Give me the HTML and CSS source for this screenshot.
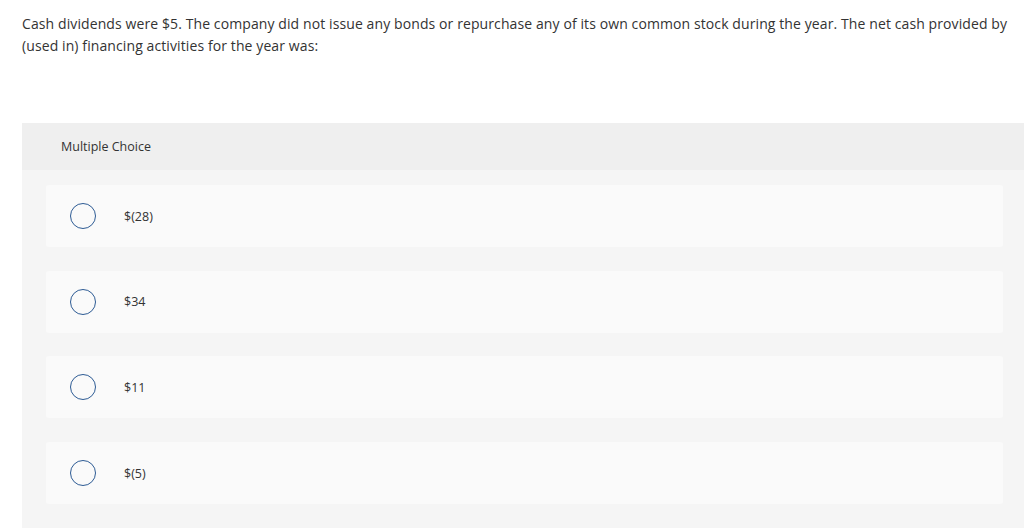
FILE: index.html
```html
<!DOCTYPE html>
<html>
<head>
<meta charset="utf-8">
<link rel="stylesheet" href="styles.css">
</head>
<body>
<div class="page">
  <p class="question">Cash dividends were $5. The company did not issue any bonds or repurchase any of its own common stock during the year. The net cash provided by (used in) financing activities for the year was:</p>
  <section class="panel">
    <div class="panel-head">Multiple Choice</div>
    <div class="choices">
      <label class="choice"><span class="radio"></span><span class="choice-text">$(28)</span></label>
      <label class="choice"><span class="radio"></span><span class="choice-text">$34</span></label>
      <label class="choice"><span class="radio"></span><span class="choice-text">$11</span></label>
      <label class="choice"><span class="radio"></span><span class="choice-text">$(5)</span></label>
    </div>
  </section>
</div>
</body>
</html>
```

FILE: styles.css
```css
html, body {
  margin: 0;
  padding: 0;
  background: #ffffff;
}
body {
  font-family: "Open Sans", "Liberation Sans", sans-serif;
  color: #333333;
  overflow: hidden;
}
.page {
  padding: 13px 0 0 22px;
}
.question {
  margin: 0;
  font-size: 14px;
  line-height: 22px;
  letter-spacing: 0.1px;
  padding-right: 6px;
}
.panel {
  margin-top: 66px;
  background: #f5f5f5;
  height: 420px;
}
.panel-head {
  background: #efefef;
  height: 47px;
  display: flex;
  align-items: center;
  padding-left: 39px;
  font-size: 12.5px;
}
.choices {
  display: flex;
  flex-direction: column;
  gap: 23.7px;
  padding: 15px 21px 0 24px;
}
.choice {
  display: flex;
  align-items: center;
  height: 62px;
  background: #fafafa;
  border-radius: 3px;
}
.radio {
  width: 24px;
  height: 24px;
  border: 1px solid #2d5b94;
  border-radius: 50%;
  margin-left: 24px;
  box-sizing: content-box;
  flex: none;
}
.choice-text {
  margin-left: 28px;
  font-size: 12.5px;
}
```
